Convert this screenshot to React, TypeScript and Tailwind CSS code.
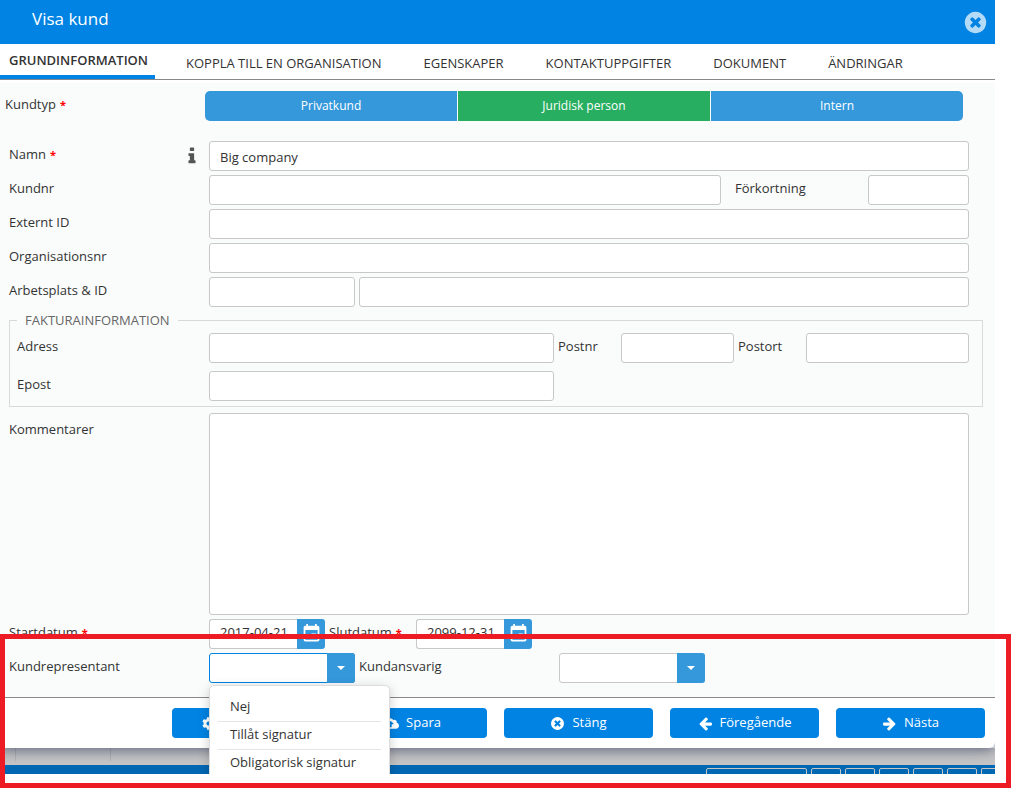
import { useState, type InputHTMLAttributes, type ReactNode } from "react";
import clsx from "clsx";
import { FaCloudUploadAlt, FaCog } from "react-icons/fa";
import { MdEvent } from "react-icons/md";

const TABS = [
  "GRUNDINFORMATION",
  "KOPPLA TILL EN ORGANISATION",
  "EGENSKAPER",
  "KONTAKTUPPGIFTER",
  "DOKUMENT",
  "ÄNDRINGAR",
];

const CUSTOMER_TYPES = ["Privatkund", "Juridisk person", "Intern"];

const SIGNATURE_OPTIONS = ["Nej", "Tillåt signatur", "Obligatorisk signatur"];

const ICONS = {
  info: "M1216 1344v128q0 26-19 45t-45 19h-512q-26 0-45-19t-19-45v-128q0-26 19-45t45-19h64v-384h-64q-26 0-45-19t-19-45v-128q0-26 19-45t45-19h384q26 0 45 19t19 45v576h64q26 0 45 19t19 45zm-128-1152v192q0 26-19 45t-45 19h-256q-26 0-45-19t-19-45v-192q0-26 19-45t45-19h256q26 0 45 19t19 45z",
  left: "M1664 896v128q0 53-32.5 90.5t-84.5 37.5h-704l293 294q38 36 38 90t-38 90l-75 76q-37 37-90 37-52 0-91-37l-651-652q-37-37-37-90 0-52 37-91l651-650q38-38 91-38 52 0 90 38l75 74q38 38 38 91t-38 91l-293 293h704q52 0 84.5 37.5t32.5 90.5z",
  right: "M1600 960q0 54-37 91l-651 651q-39 37-91 37-51 0-90-37l-75-75q-38-38-38-91t38-91l293-293h-704q-52 0-84.5-37.5t-32.5-90.5v-128q0-53 32.5-90.5t84.5-37.5h704l-293-294q-38-36-38-90t38-90l75-75q38-38 90-38 53 0 91 38l651 651q37 35 37 90z",
  close: "M1277 1122q0-26-19-45l-181-181 181-181q19-19 19-45 0-27-19-46l-90-90q-19-19-46-19-26 0-45 19l-181 181-181-181q-19-19-45-19-27 0-46 19l-90 90q-19 19-19 46 0 26 19 45l181 181-181 181q-19 19-19 45 0 27 19 46l90 90q19 19 46 19 26 0 45-19l181-181 181 181q19 19 45 19 27 0 46-19l90-90q19-19 19-46zm387-226q0 209-103 385.5t-279.5 279.5-385.5 103-385.5-103-279.5-279.5-103-385.5 103-385.5 279.5-279.5 385.5-103 385.5 103 279.5 279.5 103 385.5z",
};

function Icon({ name, size }: { name: keyof typeof ICONS; size: number }) {
  return (
    <svg width={size} height={size} viewBox="0 0 1792 1792" fill="currentColor" aria-hidden="true">
      <path d={ICONS[name]} />
    </svg>
  );
}

const inputClass = "h-[30px] min-w-0 rounded-[3px] border border-[#c8c8c8] bg-white px-[10px] outline-none";

function Input({ className, ...props }: InputHTMLAttributes<HTMLInputElement>) {
  return <input type="text" className={clsx(inputClass, className)} {...props} />;
}

function Required() {
  return <span className="ml-1 text-[11px] font-bold text-[#f00]">*</span>;
}

function Label({ htmlFor, required, className, children }: { htmlFor: string; required?: boolean; className?: string; children: ReactNode }) {
  return (
    <label htmlFor={htmlFor} className={clsx("block shrink-0 self-start leading-[26px]", className)}>
      {children}
      {required ? <Required /> : null}
    </label>
  );
}

function DateField({ id, value }: { id: string; value: string }) {
  const [date, setDate] = useState(value);

  return (
    <div className="flex">
      <Input id={id} value={date} onChange={(event) => setDate(event.target.value)} className="w-[88px] rounded-r-none border-r-0 pr-0 pb-1" />
      <button type="button" aria-label="Välj datum" className="flex h-[30px] w-7 items-center justify-center rounded-r-[3px] bg-[#3498db] pb-[2px] text-white">
        <MdEvent size={21} />
      </button>
    </div>
  );
}

function DropDown({ id, options, open }: { id: string; options: string[]; open?: boolean }) {
  return (
    <div className="relative w-[146px] shrink-0">
      <select
        id={id}
        defaultValue=""
        className={clsx(
          "block h-[30px] w-full appearance-none rounded-[3px] border bg-white px-[10px] outline-none",
          open ? "border-[#0083e3]" : "border-[#c8c8c8]",
        )}
      >
        <option value="" />
        {options.map((option) => (
          <option key={option}>{option}</option>
        ))}
      </select>
      <span className="pointer-events-none absolute top-0 right-0 flex h-[30px] w-7 items-center justify-center rounded-r-[3px] bg-[#3498db] text-white">
        <svg width="8" height="4" viewBox="0 0 8 4" fill="currentColor" aria-hidden="true">
          <path d="M0 0h8L4 4z" />
        </svg>
      </span>
      {open ? (
        <ul className="absolute top-8 left-0 z-20 w-[181px] rounded-[5px] border border-[#ddd] bg-white p-2 shadow-[0_3px_12px_rgba(0,0,0,0.2)]">
          {options.map((option) => (
            <li key={option} className="h-7 border-b border-[#e5e5e5] pl-3 leading-[25px] last:border-b-0">
              {option}
            </li>
          ))}
        </ul>
      ) : null}
    </div>
  );
}

function FooterButton({ icon, children }: { icon: ReactNode; children: ReactNode }) {
  return (
    <button type="button" className="flex h-[30px] w-[149px] items-center justify-center gap-[7px] rounded-[4px] bg-[#0083e3] font-medium text-white">
      {icon}
      {children}
    </button>
  );
}

export default function App() {
  const [tab, setTab] = useState(TABS[0]);
  const [type, setType] = useState(CUSTOMER_TYPES[1]);
  const [name, setName] = useState("Big company");

  return (
    <div className="relative bg-white pb-[14px] font-['Open_Sans','Noto_Sans',sans-serif] text-[13px] text-[#333]">
      <div className="mr-[22px] overflow-hidden">
        <div className="relative z-10 rounded-br-[6px] bg-white shadow-[0_2px_14px_rgba(20,30,70,0.6)]">
          <header className="flex h-11 items-center justify-between bg-[#0083e3] pr-[7px] pl-8 text-white">
            <h1 className="pb-[6px] text-[17px] leading-6">Visa kund</h1>
            <button type="button" aria-label="Stäng fönster" className="text-white/70">
              <Icon name="close" size={25} />
            </button>
          </header>

          <nav className="flex h-9 border-b border-[#888]">
            {TABS.map((item) => (
              <button
                key={item}
                type="button"
                onClick={() => setTab(item)}
                className={clsx(
                  "whitespace-nowrap",
                  tab === item ? "mr-[10px] w-[155px] border-b-4 border-[#0083e3] pt-[2px] pl-[9px] text-left font-semibold" : "px-[21px] pt-1",
                )}
              >
                {item}
              </button>
            ))}
          </nav>

          <form className="mt-[3px] bg-[#fafcfc] pt-2 pb-[14px]" onSubmit={(event) => event.preventDefault()}>
            <div className="flex pr-8 pl-[5px]">
              <span id="kundtyp" className="w-[200px] shrink-0 leading-[26px]">
                Kundtyp
                <Required />
              </span>
              <div role="group" aria-labelledby="kundtyp" className="grid h-[30px] flex-1 grid-cols-3 gap-px overflow-hidden rounded-[5px] text-xs font-medium text-white">
                {CUSTOMER_TYPES.map((item) => (
                  <button
                    key={item}
                    type="button"
                    aria-pressed={type === item}
                    onClick={() => setType(item)}
                    className={type === item ? "bg-[#27ae60]" : "bg-[#3498db]"}
                  >
                    {item}
                  </button>
                ))}
              </div>
            </div>

            <div className="mt-5 flex flex-col gap-1 pr-[26px] pl-[9px]">
              <div className="flex">
                <div className="flex w-[200px] shrink-0 items-center justify-between pr-[7px] text-[#555]">
                  <Label htmlFor="namn" required className="text-[#333]">Namn</Label>
                  <Icon name="info" size={20} />
                </div>
                <Input id="namn" value={name} onChange={(event) => setName(event.target.value)} className="flex-1 pt-[2px]" />
              </div>
              <div className="flex">
                <Label htmlFor="kundnr" className="w-[200px]">Kundnr</Label>
                <Input id="kundnr" className="flex-1" />
                <Label htmlFor="forkortning" className="w-[147px] pl-[14px]">Förkortning</Label>
                <Input id="forkortning" className="w-[101px]" />
              </div>
              <div className="flex">
                <Label htmlFor="externt" className="w-[200px]">Externt ID</Label>
                <Input id="externt" className="flex-1" />
              </div>
              <div className="flex">
                <Label htmlFor="orgnr" className="w-[200px]">Organisationsnr</Label>
                <Input id="orgnr" className="flex-1" />
              </div>
              <div className="flex">
                <Label htmlFor="arbetsplats" className="w-[200px]">Arbetsplats &amp; ID</Label>
                <Input id="arbetsplats" className="mr-1 w-[146px]" />
                <Input aria-label="Arbetsplats ID" className="flex-1" />
              </div>
            </div>

            <fieldset className="mt-[3px] mr-3 ml-[9px] border border-[#d8dada] pr-[13px] pb-[5px] pl-[7px]">
              <legend className="px-2 leading-[20px] text-[#666]">FAKTURAINFORMATION</legend>
              <div className="mt-[3px] flex">
                <Label htmlFor="adress" className="w-48">Adress</Label>
                <Input id="adress" className="flex-1" />
                <Label htmlFor="postnr" className="w-[67px] pl-1">Postnr</Label>
                <Input id="postnr" className="w-[113px]" />
                <Label htmlFor="postort" className="w-[72px] pl-1">Postort</Label>
                <Input id="postort" className="w-[163px]" />
              </div>
              <div className="mt-2 flex pr-[415px]">
                <Label htmlFor="epost" className="w-48">Epost</Label>
                <Input id="epost" type="email" className="flex-1" />
              </div>
            </fieldset>

            <div className="mt-[6px] flex flex-col gap-1 pr-[26px] pl-[9px]">
              <div className="flex">
                <Label htmlFor="kommentarer" className="w-[200px] pt-[3px]">Kommentarer</Label>
                <textarea id="kommentarer" className="h-[202px] flex-1 resize-none rounded-[3px] border border-[#c8c8c8] bg-white p-[10px] outline-none" />
              </div>
              <div className="flex">
                <Label htmlFor="startdatum" required className="w-[200px]">Startdatum</Label>
                <DateField id="startdatum" value="2017-04-21" />
                <Label htmlFor="slutdatum" required className="w-[91px] pl-1">Slutdatum</Label>
                <DateField id="slutdatum" value="2099-12-31" />
              </div>
              <div className="flex">
                <Label htmlFor="representant" className="w-[200px]">Kundrepresentant</Label>
                <DropDown id="representant" options={SIGNATURE_OPTIONS} open />
                <Label htmlFor="ansvarig" className="w-[204px] pl-1">Kundansvarig</Label>
                <DropDown id="ansvarig" options={[]} />
              </div>
            </div>
          </form>

          <footer className="flex justify-end gap-[17px] border-t border-[#888] py-[10px] pr-[10px]">
            <button type="button" aria-label="Verktyg" className="flex h-[30px] w-[149px] items-center rounded-[4px] bg-[#0083e3] pl-[30px] text-white">
              <FaCog size={13} />
            </button>
            <FooterButton icon={<FaCloudUploadAlt size={15} />}>Spara</FooterButton>
            <FooterButton icon={<Icon name="close" size={15} />}>Stäng</FooterButton>
            <FooterButton icon={<Icon name="left" size={15} />}>Föregående</FooterButton>
            <FooterButton icon={<Icon name="right" size={15} />}>Nästa</FooterButton>
          </footer>
        </div>

        {/* the dimmed page that shows below the dialog */}
        <div className="h-[17px] bg-[#c6c6c6] pl-[15px]">
          <div className="h-[13px] w-24 border-x border-[#b4b4b4]" />
        </div>
        <div className="flex h-[9px] justify-end gap-1 overflow-hidden bg-[#0067b3] pt-[3px]">
          <div className="h-4 w-[101px] rounded-[2px] border border-[#c6c6c6]" />
          {[0, 1, 2, 3, 4].map((item) => (
            <div key={item} className="h-4 w-[30px] rounded-[2px] border border-[#c6c6c6]" />
          ))}
          <div className="h-4 w-[14px] rounded-tl-[2px] border-t border-l border-[#c6c6c6]" />
        </div>
      </div>

      {/* highlight frame round the representative row and the buttons */}
      <div className="pointer-events-none absolute right-[6px] bottom-0 left-0 z-30 h-[154px] border-5 border-[#ed1c24]" />
    </div>
  );
}
